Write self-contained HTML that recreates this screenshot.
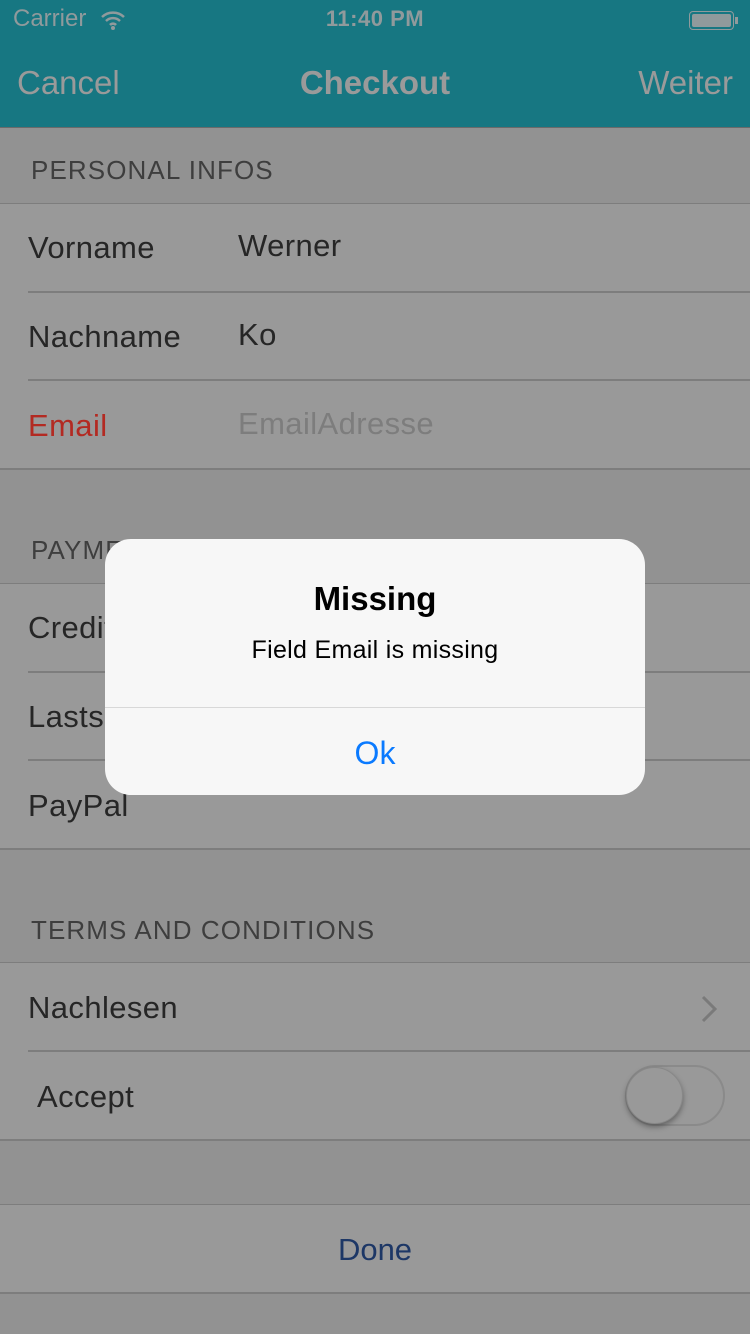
<!DOCTYPE html>
<html><head><meta charset="utf-8"><style>
*{margin:0;padding:0;box-sizing:border-box}
body{width:750px;height:1334px;position:relative;background:#929292;font-family:"Liberation Sans",sans-serif;overflow:hidden}
.a{position:absolute}
.nav{left:0;top:0;width:750px;height:128px;background:#177782;border-bottom:1px solid #6a6a6a}
.cell{position:absolute;left:0;width:750px;background:#999}
.line{position:absolute;height:2px;background:#7d7d7d}
.t{position:absolute;font-size:31px;color:#262626;white-space:nowrap;letter-spacing:0.4px}
.h{position:absolute;font-size:26px;color:#3e3e3e;left:31px;letter-spacing:1.1px}
</style></head><body>
<div class="a nav"></div>
<div class="a" style="left:13px;top:5px;font-size:24px;color:#909a9c">Carrier</div>
<svg class="a" style="left:100px;top:10px" width="26" height="20" viewBox="0 0 26 20"><path d="M2 7a16 16 0 0 1 22 0M6 11a10 10 0 0 1 14 0M10 15a4 4 0 0 1 6 0" stroke="#909a9c" stroke-width="2.5" fill="none"/><circle cx="13" cy="18" r="2" fill="#909a9c"/></svg>
<div class="a" style="left:0;width:750px;text-align:center;top:6px;font-size:22px;color:#909a9c;font-weight:bold;letter-spacing:0.5px">11:40 PM</div>
<div class="a" style="left:689px;top:11px;width:45px;height:19px;border:1.5px solid #909a9c;border-radius:4px;padding:2px"><div style="width:100%;height:100%;background:#909a9c;border-radius:2px"></div></div>
<div class="a" style="left:735px;top:17px;width:3px;height:7px;background:#909a9c"></div>
<div class="a" style="left:17px;top:64px;font-size:33px;color:#9a9a9a">Cancel</div>
<div class="a" style="left:0;width:750px;text-align:center;top:64px;font-size:33px;font-weight:bold;color:#9a9a9a">Checkout</div>
<div class="a" style="right:17px;top:64px;font-size:33px;color:#9a9a9a">Weiter</div>

<div class="h" style="top:155px">PERSONAL INFOS</div>
<div class="line" style="left:0;width:750px;top:203px"></div>
<div class="cell" style="top:204px;height:265px"></div>
<div class="line" style="left:28px;width:722px;top:291px"></div>
<div class="line" style="left:28px;width:722px;top:379px"></div>
<div class="line" style="left:0;width:750px;top:468px"></div>
<div class="t" style="left:28px;top:230px">Vorname</div><div class="t" style="left:238px;top:228px">Werner</div>
<div class="t" style="left:28px;top:319px">Nachname</div><div class="t" style="left:238px;top:317px">Ko</div>
<div class="t" style="left:28px;top:408px;color:#b32a22">Email</div><div class="t" style="left:238px;top:406px;color:#7d7d7d">EmailAdresse</div>

<div class="h" style="top:535px">PAYMENT</div>
<div class="line" style="left:0;width:750px;top:583px"></div>
<div class="cell" style="top:584px;height:265px"></div>
<div class="line" style="left:28px;width:722px;top:671px"></div>
<div class="line" style="left:28px;width:722px;top:759px"></div>
<div class="line" style="left:0;width:750px;top:848px"></div>
<div class="t" style="left:28px;top:610px">Credit Card</div>
<div class="t" style="left:28px;top:699px">Lastschrift</div>
<div class="t" style="left:28px;top:788px">PayPal</div>

<div class="h" style="top:915px">TERMS AND CONDITIONS</div>
<div class="line" style="left:0;width:750px;top:962px"></div>
<div class="cell" style="top:963px;height:177px"></div>
<div class="line" style="left:28px;width:722px;top:1050px"></div>
<div class="line" style="left:0;width:750px;top:1139px"></div>
<div class="t" style="left:28px;top:990px">Nachlesen</div>
<svg class="a" style="left:700px;top:995px" width="20" height="28"><path d="M3 2l12 12-12 12" stroke="#7a7a7a" stroke-width="3" fill="none"/></svg>
<div class="t" style="left:37px;top:1079px">Accept</div>
<div class="a" style="left:625px;top:1065px;width:100px;height:61px;border-radius:31px;border:2px solid #8a8a8a"></div>
<div class="a" style="left:626px;top:1067px;width:57px;height:57px;border-radius:50%;background:#999;box-shadow:0 3px 6px rgba(0,0,0,.35);border:1px solid #888"></div>

<div class="line" style="left:0;width:750px;top:1204px"></div>
<div class="cell" style="top:1205px;height:88px"></div>
<div class="line" style="left:0;width:750px;top:1292px"></div>
<div class="a" style="left:0;width:750px;text-align:center;top:1232px;font-size:31px;color:#1d3766">Done</div>

<div class="a" style="left:105px;top:539px;width:540px;height:256px;background:#f7f7f7;border-radius:26px;overflow:hidden">
<div class="a" style="left:0;width:540px;text-align:center;top:41px;font-size:33px;font-weight:bold;color:#000">Missing</div>
<div class="a" style="left:0;width:540px;text-align:center;top:97px;font-size:25px;color:#000;letter-spacing:0.3px">Field Email is missing</div>
<div class="a" style="left:0;width:540px;top:168px;height:1px;background:#d8d8d8"></div>
<div class="a" style="left:0;width:540px;text-align:center;top:196px;font-size:32px;color:#0a7aff">Ok</div>
</div>
</body></html>
